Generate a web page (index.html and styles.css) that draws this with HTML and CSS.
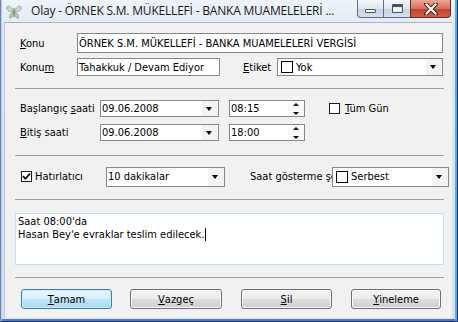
FILE: index.html
```html
<!DOCTYPE html>
<html>
<head>
<meta charset="utf-8">
<link rel="stylesheet" href="styles.css">
</head>
<body>
<div class="window">
  <div class="titlebar">
    <svg class="appicon" width="16" height="16" viewBox="0 0 16 16">
      <path d="M8 8 C5 2 2 1 1 3 C0 6 3 8 8 8 Z" fill="#c9d9c3" stroke="#8aa086" stroke-width="0.8"/>
      <path d="M8 8 C11 2 14 1 15 3 C16 6 13 8 8 8 Z" fill="#c9d9c3" stroke="#8aa086" stroke-width="0.8"/>
      <path d="M8 8 C5 9 2 12 4 14 C6 15 7 11 8 8 Z" fill="#b8ccb2" stroke="#8aa086" stroke-width="0.8"/>
      <path d="M8 8 C11 9 14 12 12 14 C10 15 9 11 8 8 Z" fill="#b8ccb2" stroke="#8aa086" stroke-width="0.8"/>
      <path d="M8 4 L8 13" stroke="#6d7d68" stroke-width="1"/>
    </svg>
    <span class="title">Olay - ÖRNEK S.M. MÜKELLEFİ - BANKA MUAMELELERİ ...</span>
    <div class="caption-btns">
      <div class="cbtn cmin"><span class="g-min"></span></div>
      <div class="cbtn cmax"><span class="g-max"></span></div>
      <div class="cbtn cclose">
        <svg width="14" height="12" viewBox="0 0 14 12">
          <path d="M2 1 L12 11 M12 1 L2 11" stroke="#4a1a14" stroke-width="4" stroke-linecap="square"/>
          <path d="M2.5 1.5 L11.5 10.5 M11.5 1.5 L2.5 10.5" stroke="#ffffff" stroke-width="2.2" stroke-linecap="square"/>
        </svg>
      </div>
    </div>
  </div>
  <div class="client">
    <div class="row row1">
      <span class="lbl w57"><u>K</u>onu</span>
      <div class="edit konu">ÖRNEK S.M. MÜKELLEFİ - BANKA MUAMELELERİ VERGİSİ</div>
    </div>
    <div class="row row2">
      <span class="lbl w57">Konu<u>m</u></span>
      <div class="edit konum">Tahakkuk / Devam Ediyor</div>
      <span class="lbl etiket"><u>E</u>tiket</span>
      <div class="combo etiketcombo">
        <span class="swatch"></span><span class="ctext">Yok</span>
        <span class="arrow"></span>
      </div>
    </div>
    <div class="sep sep1"></div>
    <div class="row row3">
      <span class="lbl w80">Başlangıç <u>s</u>aati</span>
      <div class="combo date"><span class="ctext">09.06.2008</span><span class="arrow"></span></div>
      <div class="spin"><span class="ctext">08:15</span><span class="spinbtns"><span class="up"></span><span class="down"></span></span></div>
      <span class="check allday"></span>
      <span class="chklbl"><u>T</u>üm Gün</span>
    </div>
    <div class="row row4">
      <span class="lbl w80"><u>B</u>itiş saati</span>
      <div class="combo date"><span class="ctext">09.06.2008</span><span class="arrow"></span></div>
      <div class="spin"><span class="ctext">18:00</span><span class="spinbtns"><span class="up"></span><span class="down"></span></span></div>
    </div>
    <div class="sep sep2"></div>
    <div class="row row5">
      <div class="chkcell">
        <span class="check checked">
          <svg width="9" height="9" viewBox="0 0 9 9"><path d="M1 4.2 L3.4 6.8 L8 1.6" fill="none" stroke="#000" stroke-width="1.7"/></svg>
        </span>
        <span class="chklbl2">Hatırlatıcı</span>
      </div>
      <div class="combo remind"><span class="ctext">10 dakikalar</span><span class="arrow"></span></div>
      <span class="lbl showas">Saat gösterme şekli</span>
      <div class="combo showcombo"><span class="swatch"></span><span class="ctext">Serbest</span><span class="arrow"></span></div>
    </div>
    <div class="sep sep3"></div>
    <div class="memo">Saat 08:00'da<br>Hasan Bey'e evraklar teslim edilecek.<span class="caret"></span></div>
    <div class="sep sep4"></div>
    <div class="row buttons">
      <div class="btn default b1"><u>T</u>amam</div>
      <div class="btn b2"><u>V</u>azgeç</div>
      <div class="btn b3"><u>S</u>il</div>
      <div class="btn b4"><u>Y</u>ineleme</div>
    </div>
  </div>
</div>
</body>
</html>
```

FILE: styles.css
```css
* { box-sizing: border-box; }
html, body { margin: 0; padding: 0; }
body { width: 458px; height: 322px; overflow: hidden; background: #fff; }

.window {
  width: 458px;
  height: 322px;
  display: flex;
  flex-direction: column;
  background: linear-gradient(#eef3f9, #dfe8f3 30px, #d6e1ee);
  border-left: 1px solid #6d80b8;
  border-right: 1px solid #1d2f50;
  border-bottom: 1px solid #253a66;
  box-shadow: inset 1px 0 0 #b7c9e6, inset -2px 0 0 #59a8f0, inset 0 -2px 0 #4a78c8;
}

.titlebar {
  height: 22px;
  flex: none;
  display: flex;
  align-items: flex-start;
  position: relative;
}
.appicon { margin: 4px 0 0 5px; flex: none; }
.title {
  margin: 3px 0 0 9px;
  font-family: "Open Sans", "Noto Sans", sans-serif;
  font-size: 12px;
  line-height: 16px;
  color: #1a1a1a;
  white-space: nowrap;
  letter-spacing: -0.2px;
}
.caption-btns {
  position: absolute;
  right: 6px;
  top: 0;
  display: flex;
  height: 18px;
}
.cbtn {
  height: 18px;
  display: flex;
  align-items: center;
  justify-content: center;
  border: 1px solid #5d6d85;
  border-top: none;
  background: linear-gradient(#f4f7fb, #dde5ef 50%, #c7d3e2 51%, #d6e0ec);
}
.cmin { width: 26px; border-radius: 0 0 0 4px; border-right: none; }
.cmax { width: 27px; border-right: none; }
.cclose {
  width: 41px;
  border-radius: 0 0 4px 0;
  border-color: #6b2a22;
  background: linear-gradient(#eaa696, #d9705e 50%, #c0402c 51%, #d35e44);
}
.g-min { width: 11px; height: 4px; margin-top: 5px; border: 1px solid #4a5366; background: #fff; border-radius: 1px; }
.g-max { width: 11px; height: 9px; border: 1px solid #4a5366; border-top-width: 3px; background: #fff; border-radius: 1px; box-shadow: inset 0 0 0 1px #e8ecf2; }

.client {
  flex: 1;
  margin: 0 5px 3px 3px;
  background: #f1f1f1;
  border-top: 1px solid #a9b5c6;
  border-left: 1px solid #b9c6da;
  display: flex;
  flex-direction: column;
  padding: 10px 0 0 10px;
  font-family: "DejaVu Sans Condensed", "DejaVu Sans", sans-serif;
  font-size: 11px;
  color: #000;
}

.row { display: flex; align-items: center; flex: none; }
.lbl { white-space: nowrap; flex: none; margin-left: 5px; }
.w57 { width: 57px; }
.w80 { width: 80px; }

.row1 { height: 20px; }
.row2 { height: 18px; margin-top: 5px; }
.row3 { height: 17px; margin-top: 11px; }
.row4 { height: 17px; margin-top: 7px; }
.row5 { height: 21px; margin-top: 10px; }
.memo { margin-top: 13px; }
.buttons { height: 20px; margin-top: 11px; }

.edit, .combo, .spin {
  background: #fff;
  border: 1px solid #828790;
  height: 100%;
  display: flex;
  align-items: center;
  white-space: nowrap;
  overflow: hidden;
  flex: none;
  padding-left: 1px;
}
.konu { width: 366px; }
.konum { width: 143px; }
.etiket { width: 34px; margin-left: 23px; }
.etiketcombo { width: 166px; }

.swatch {
  width: 12px; height: 12px;
  border: 1px solid #000;
  background: #fff;
  margin: 0 3px 0 2px;
  flex: none;
}
.ctext { flex: 1; }
.arrow {
  flex: none;
  width: 16px;
  height: 100%;
  background: #f4f4f4 ;
  position: relative;
}
.arrow::after {
  content: "";
  position: absolute;
  left: 4px;
  top: 50%;
  margin-top: -2px;
  border-left: 3.5px solid transparent;
  border-right: 3.5px solid transparent;
  border-top: 4px solid #000;
}

.date { width: 119px; }
.spin { width: 76px; margin-left: 10px; }
.spinbtns { width: 16px; height: 100%; display: flex; flex-direction: column; flex: none; }
.spinbtns span { flex: 1; position: relative; }
.spinbtns .up::after {
  content: ""; position: absolute; left: 5px; top: 2px;
  border-left: 3px solid transparent; border-right: 3px solid transparent;
  border-bottom: 3px solid #000;
}
.spinbtns .down::after {
  content: ""; position: absolute; left: 5px; top: 3px;
  border-left: 3px solid transparent; border-right: 3px solid transparent;
  border-top: 3px solid #000;
}

.check {
  width: 11px; height: 11px;
  border: 1px solid #1c1c1c;
  background: #fff;
  flex: none;
  display: flex;
  align-items: center;
  justify-content: center;
}
.allday { margin-left: 24px; }
.chklbl { margin-left: 5px; }
.chkcell { width: 85px; margin-left: 6px; display: flex; align-items: center; flex: none; }
.chklbl2 { margin-left: 3px; }
.remind { width: 119px; height: 20px; }
.showas { width: 82px; margin-left: 25px; overflow: hidden; }
.showcombo { width: 117px; height: 20px; }

.sep { height: 1px; width: 429px; background: #a0a0a0; flex: none; }
.sep1 { margin-top: 12px; }
.sep2 { margin-top: 14px; }
.sep3 { margin-top: 12px; }
.sep4 { margin-top: 12px; }

.memo {
  width: 429px;
  height: 52px;
  background: #fff;
  border: 1px solid #bfe0f0;
  padding: 1px 0 0 2px;
  line-height: 13px;
  flex: none;
}
.caret { display: inline-block; width: 1px; height: 13px; background: #000; vertical-align: top; margin-left: 1px; }

.btn {
  height: 20px;
  flex: none;
  display: flex;
  align-items: center;
  justify-content: center;
  border: 1px solid #707070;
  border-radius: 3px;
  background: linear-gradient(#f2f2f2, #ebebeb 50%, #dddddd 51%, #cfcfcf);
  box-shadow: inset 0 0 0 1px #fbfbfb;
}
.default {
  border-color: #3c7fb1;
  background: linear-gradient(#eaf6fd, #d9f0fc 50%, #bee6fd 51%, #a7d9f5);
  box-shadow: inset 0 0 0 1px #cdeaf9;
}
.b1 { width: 91px; margin-left: 6px; }
.b2 { width: 92px; margin-left: 18px; }
.b3 { width: 91px; margin-left: 19px; }
.b4 { width: 90px; margin-left: 19px; }
```
